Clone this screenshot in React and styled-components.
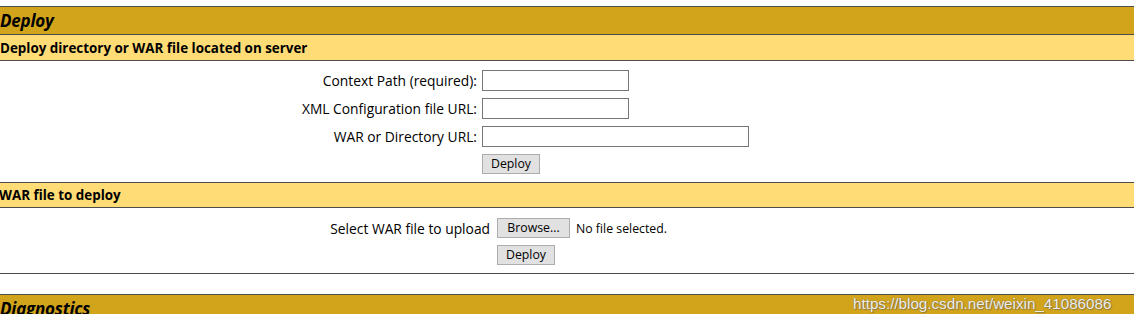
import React from "react";
import styled, { createGlobalStyle } from "styled-components";

const Global = createGlobalStyle`
  html, body { margin: 0; padding: 0; background: #fff; }
  body { font-family: "Open Sans", "Noto Sans", sans-serif; color: #000; overflow: hidden; }
`;

const Page = styled.div`
  position: relative;
  width: 1134px;
  height: 314px;
  padding-top: 6px;
  box-sizing: border-box;
  overflow: hidden;
`;

const Section = styled.section`
  border-top: 1px solid #4d4d4d;
  border-bottom: 1px solid #4d4d4d;
  margin-bottom: ${(p) => p.$gap || 0}px;
`;

const Title = styled.div`
  height: 27px;
  display: flex;
  align-items: center;
  background: #d2a41c;
  border-bottom: 1px solid #4d4d4d;
  font-size: 17px;
  font-weight: bold;
  font-style: italic;
  letter-spacing: -0.2px;
`;

const SubHeader = styled.div`
  height: ${(p) => p.$h}px;
  display: flex;
  align-items: center;
  background: #ffdc75;
  border-bottom: 1px solid #4d4d4d;
  border-top: ${(p) => (p.$top ? "1px solid #4d4d4d" : "none")};
  font-size: 13.4px;
  font-weight: bold;
  margin-left: ${(p) => p.$shift || 0}px;
`;

const FormGrid = styled.div`
  display: grid;
  grid-template-columns: ${(p) => p.$label}px 1fr;
  column-gap: ${(p) => p.$col}px;
  row-gap: 7px;
  padding: ${(p) => p.$pt}px 0 ${(p) => p.$pb}px;
  align-items: center;
`;

const Label = styled.div`
  text-align: right;
  font-size: 13.8px;
  white-space: nowrap;
`;

const Field = styled.div`
  display: flex;
  align-items: center;
  gap: 6px;
`;

const TextInput = styled.input`
  box-sizing: border-box;
  width: ${(p) => p.$w}px;
  height: 21px;
  border: 1px solid #767676;
  margin: 0;
  padding: 1px 2px;
  font-size: 13px;
  background: #fff;
`;

const Button = styled.button`
  box-sizing: border-box;
  width: ${(p) => p.$w}px;
  height: 20px;
  margin: 0;
  padding: 0;
  background: #e1e1e1;
  border: 1px solid #adadad;
  border-radius: 0;
  font-family: "Open Sans", "Noto Sans", sans-serif;
  font-size: 12.3px;
  color: #000;
  line-height: 18px;
`;

const FileNote = styled.span`
  font-size: 12.3px;
`;

const Watermark = styled.div`
  position: absolute;
  left: 853px;
  top: 295px;
  font-family: "Liberation Sans", Arial, sans-serif;
  font-size: 15.2px;
  color: rgba(255, 255, 255, 0.9);
  text-shadow: 0 0 1px rgba(90, 90, 90, 0.8), 1px 1px 1px rgba(90, 90, 90, 0.5);
  white-space: nowrap;
`;

export default function App() {
  return (
    <Page>
      <Global />
      <Section $gap={20}>
        <Title>Deploy</Title>
        <SubHeader $h={25}>Deploy directory or WAR file located on server</SubHeader>
        <FormGrid $label={477} $col={5} $pt={9} $pb={8}>
          <Label>Context Path (required):</Label>
          <Field><TextInput $w={147} /></Field>
          <Label>XML Configuration file URL:</Label>
          <Field><TextInput $w={147} /></Field>
          <Label>WAR or Directory URL:</Label>
          <Field><TextInput $w={267} /></Field>
          <Label />
          <Field><Button $w={58}>Deploy</Button></Field>
        </FormGrid>
        <SubHeader $h={24} $top $shift={-1}>WAR file to deploy</SubHeader>
        <FormGrid $label={490} $col={7} $pt={10} $pb={8}>
          <Label>Select WAR file to upload</Label>
          <Field>
            <Button $w={73}>Browse...</Button>
            <FileNote>No file selected.</FileNote>
          </Field>
          <Label />
          <Field><Button $w={58}>Deploy</Button></Field>
        </FormGrid>
      </Section>
      <Section>
        <Title>Diagnostics</Title>
      </Section>
      <Watermark>https://blog.csdn.net/weixin_41086086</Watermark>
    </Page>
  );
}
